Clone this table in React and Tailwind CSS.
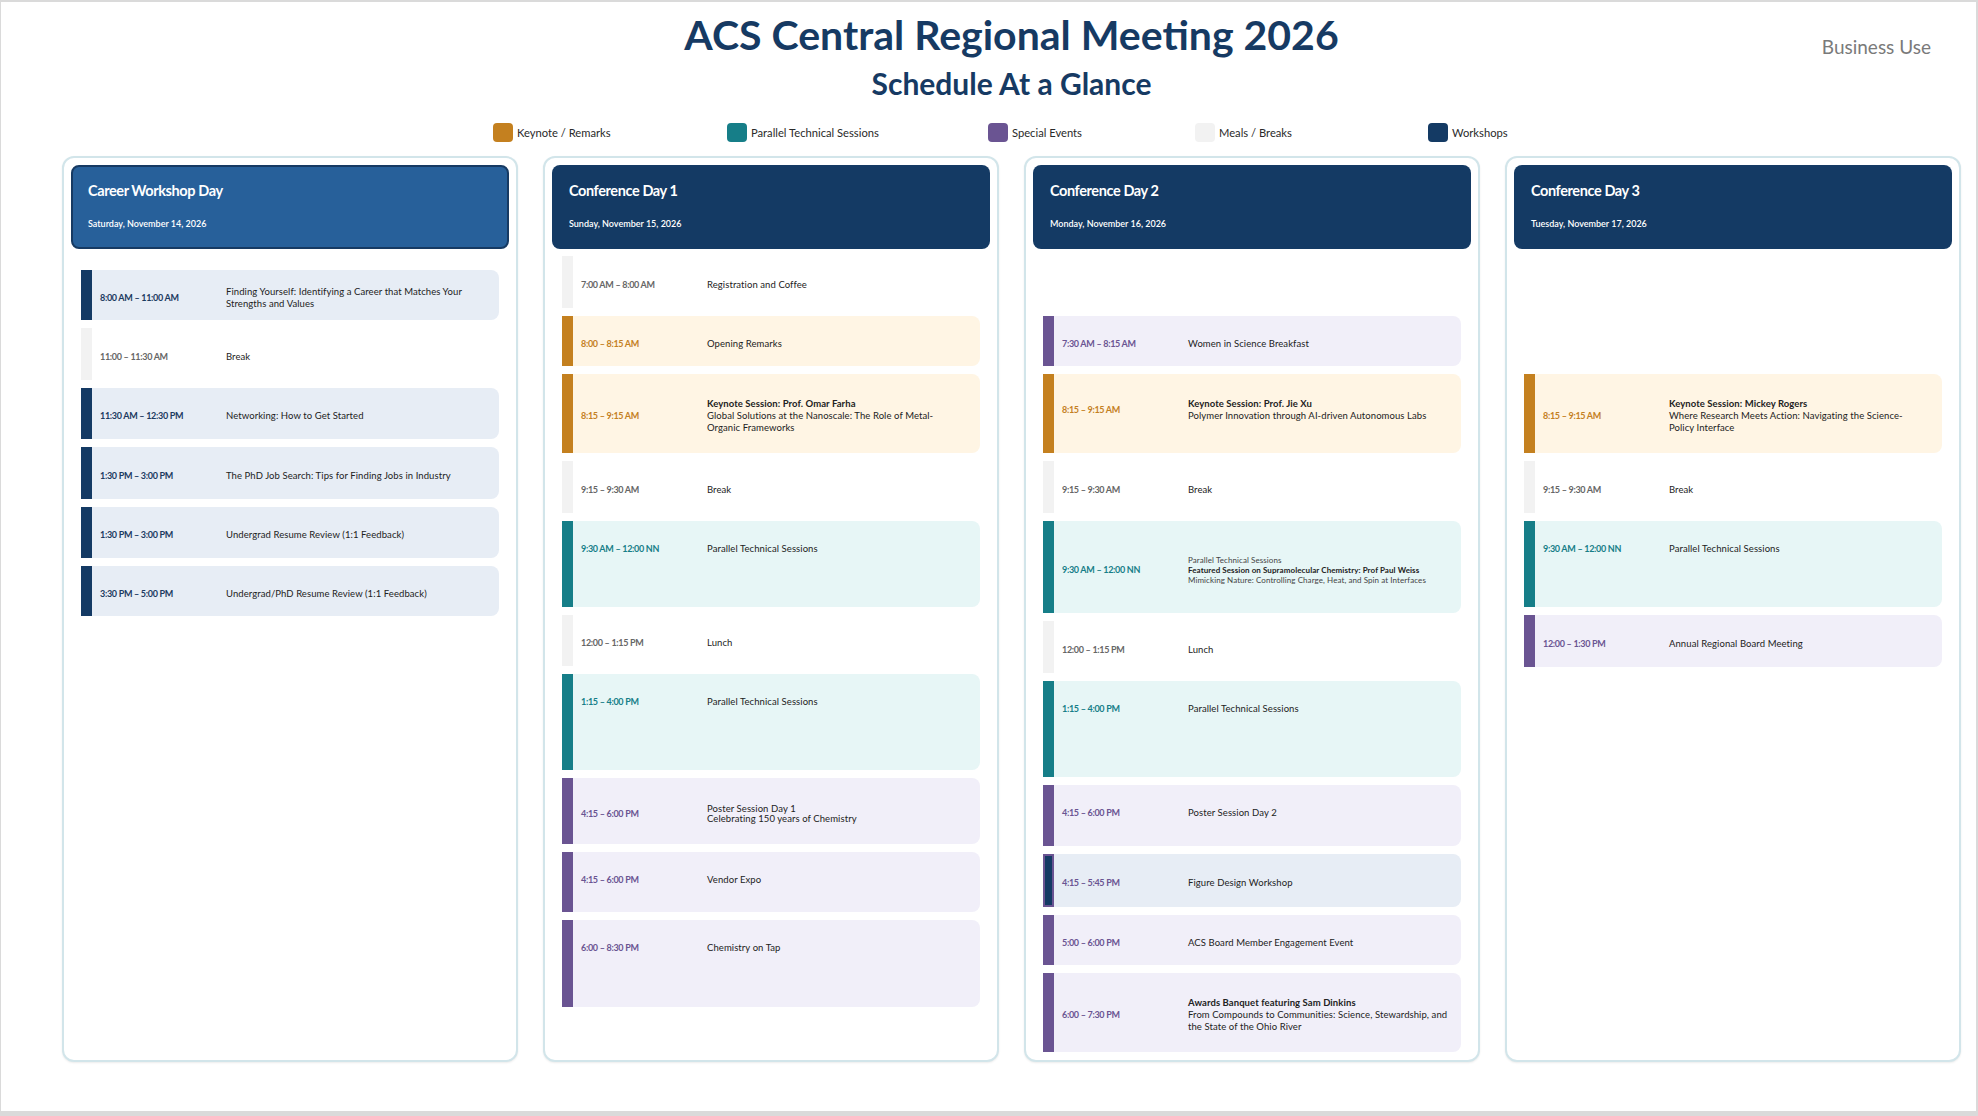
import React from "react";

const T = {
  ws: { bar: "bg-[#143a64]", bg: "bg-[#e7edf5]", time: "text-[#1b3a60]" },
  meal: { bar: "bg-[#f2f2f2]", bg: "bg-white", time: "text-[#666666]" },
  key: { bar: "bg-[#c4801f]", bg: "bg-[#fff5e4]", time: "text-[#c4801f]" },
  par: { bar: "bg-[#167e88]", bg: "bg-[#e7f6f6]", time: "text-[#167e88]" },
  sp: { bar: "bg-[#6a5492]", bg: "bg-[#f1eff9]", time: "text-[#6a5492]" },
  fig: { bar: "bg-[#143a64] border-2 border-[#6a5492]", bg: "bg-[#e7edf5]", time: "text-[#6a5492]" },
};

const C = "items-center pt-[5px]";
const TOP = "items-start pt-[22px]";
const TOP2 = "items-start pt-[24px]";

const B = "font-bold";
const SM = "text-[8px] leading-[10px] text-[#444]";
const SMB = "text-[8px] leading-[10px] font-bold";
const TL = "leading-[10px]";

const columns = [
  {
    title: "Career Workshop Day",
    date: "Saturday, November 14, 2026",
    light: true,
    mt: "mt-[21px]",
    rows: [
      { ty: "ws", h: "h-[50px]", a: C, time: "8:00 AM – 11:00 AM", lines: [["Finding Yourself: Identifying a Career that Matches Your"], ["Strengths and Values"]] },
      { ty: "meal", h: "h-[52px]", a: C, time: "11:00 – 11:30 AM", lines: [["Break"]] },
      { ty: "ws", h: "h-[51px]", a: C, time: "11:30 AM – 12:30 PM", lines: [["Networking: How to Get Started"]] },
      { ty: "ws", h: "h-[52px]", a: C, time: "1:30 PM – 3:00 PM", lines: [["The PhD Job Search: Tips for Finding Jobs in Industry"]] },
      { ty: "ws", h: "h-[51px]", a: C, time: "1:30 PM – 3:00 PM", lines: [["Undergrad Resume Review (1:1 Feedback)"]] },
      { ty: "ws", h: "h-[50px]", a: C, time: "3:30 PM – 5:00 PM", lines: [["Undergrad/PhD Resume Review (1:1 Feedback)"]] },
    ],
  },
  {
    title: "Conference Day 1",
    date: "Sunday, November 15, 2026",
    mt: "mt-[7px]",
    rows: [
      { ty: "meal", h: "h-[52px]", a: C, time: "7:00 AM – 8:00 AM", lines: [["Registration and Coffee"]] },
      { ty: "key", h: "h-[50px]", a: C, time: "8:00 – 8:15 AM", lines: [["Opening Remarks"]] },
      { ty: "key", h: "h-[79px]", a: C, time: "8:15 – 9:15 AM", lines: [["Keynote Session: Prof. Omar Farha", B], ["Global Solutions at the Nanoscale: The Role of Metal-"], ["Organic Frameworks"]] },
      { ty: "meal", h: "h-[52px]", a: C, time: "9:15 – 9:30 AM", lines: [["Break"]] },
      { ty: "par", h: "h-[86px]", a: TOP, time: "9:30 AM – 12:00 NN", lines: [["Parallel Technical Sessions"]] },
      { ty: "meal", h: "h-[51px]", a: C, time: "12:00 – 1:15 PM", lines: [["Lunch"]] },
      { ty: "par", h: "h-[96px]", a: TOP, time: "1:15 – 4:00 PM", lines: [["Parallel Technical Sessions"]] },
      { ty: "sp", h: "h-[66px]", a: C, time: "4:15 – 6:00 PM", lines: [["Poster Session Day 1", TL], ["Celebrating 150 years of Chemistry", TL]] },
      { ty: "sp", h: "h-[60px]", a: TOP, time: "4:15 – 6:00 PM", lines: [["Vendor Expo"]] },
      { ty: "sp", h: "h-[87px]", a: TOP, time: "6:00 – 8:30 PM", lines: [["Chemistry on Tap"]] },
    ],
  },
  {
    title: "Conference Day 2",
    date: "Monday, November 16, 2026",
    mt: "mt-[67px]",
    rows: [
      { ty: "sp", h: "h-[50px]", a: C, time: "7:30 AM – 8:15 AM", lines: [["Women in Science Breakfast"]] },
      { ty: "key", h: "h-[79px]", a: TOP2, time: "8:15 – 9:15 AM", lines: [["Keynote Session: Prof. Jie Xu", B], ["Polymer Innovation through AI-driven Autonomous Labs"]] },
      { ty: "meal", h: "h-[52px]", a: C, time: "9:15 – 9:30 AM", lines: [["Break"]] },
      { ty: "par", h: "h-[92px]", a: C, time: "9:30 AM – 12:00 NN", lines: [["Parallel Technical Sessions", SM], ["Featured Session on Supramolecular Chemistry: Prof Paul Weiss", SMB], ["Mimicking Nature: Controlling Charge, Heat, and Spin at Interfaces", SM]] },
      { ty: "meal", h: "h-[52px]", a: C, time: "12:00 – 1:15 PM", lines: [["Lunch"]] },
      { ty: "par", h: "h-[96px]", a: TOP, time: "1:15 – 4:00 PM", lines: [["Parallel Technical Sessions"]] },
      { ty: "sp", h: "h-[61px]", a: TOP, time: "4:15 – 6:00 PM", lines: [["Poster Session Day 2"]] },
      { ty: "fig", h: "h-[53px]", a: C, time: "4:15 – 5:45 PM", lines: [["Figure Design Workshop"]] },
      { ty: "sp", h: "h-[50px]", a: C, time: "5:00 – 6:00 PM", lines: [["ACS Board Member Engagement Event"]] },
      { ty: "sp", h: "h-[79px]", a: C, time: "6:00 – 7:30 PM", lines: [["Awards Banquet featuring Sam Dinkins", B], ["From Compounds to Communities: Science, Stewardship, and"], ["the State of the Ohio River"]] },
    ],
  },
  {
    title: "Conference Day 3",
    date: "Tuesday, November 17, 2026",
    mt: "mt-[125px]",
    rows: [
      { ty: "key", h: "h-[79px]", a: C, time: "8:15 – 9:15 AM", lines: [["Keynote Session: Mickey Rogers", B], ["Where Research Meets Action: Navigating the Science-"], ["Policy Interface"]] },
      { ty: "meal", h: "h-[52px]", a: C, time: "9:15 – 9:30 AM", lines: [["Break"]] },
      { ty: "par", h: "h-[86px]", a: TOP, time: "9:30 AM – 12:00 NN", lines: [["Parallel Technical Sessions"]] },
      { ty: "sp", h: "h-[52px]", a: C, time: "12:00 – 1:30 PM", lines: [["Annual Regional Board Meeting"]] },
    ],
  },
];

const legend = [
  { label: "Keynote / Remarks", sw: "bg-[#c4801f]", w: "w-[234px]" },
  { label: "Parallel Technical Sessions", sw: "bg-[#167e88]", w: "w-[261px]" },
  { label: "Special Events", sw: "bg-[#6a5492]", w: "w-[207px]" },
  { label: "Meals / Breaks", sw: "bg-[#f2f2f2]", w: "w-[233px]" },
  { label: "Workshops", sw: "bg-[#143a64]", w: "w-auto" },
];

function Row({ r }) {
  const t = T[r.ty];
  return (
    <div className={`flex ${r.h}`}>
      <div className={`w-[11px] shrink-0 ${t.bar}`} />
      <div className={`flex flex-1 rounded-r-[8px] pl-[8px] ${t.bg} ${r.a}`}>
        <div className="flex w-full items-center">
          <div className={`w-[126px] shrink-0 whitespace-nowrap text-[9px] font-bold leading-[12px] tracking-[-0.3px] ${t.time}`}>
            {r.time}
          </div>
          <div className="flex-1 text-[9.5px] leading-[12px] tracking-[0.08px] text-[#222222]">
            {r.lines.map(([txt, cls], i) => (
              <div key={i} className={`whitespace-nowrap ${cls || ""}`}>
                {txt}
              </div>
            ))}
          </div>
        </div>
      </div>
    </div>
  );
}

function Column({ c }) {
  return (
    <div className="flex h-[906px] flex-col rounded-[12px] border-2 border-[#d2e5ea] bg-white px-[7px] pt-[7px] shadow-[0_1px_2px_rgba(0,0,0,0.08)]">
      <div
        className={
          c.light
            ? "h-[84px] rounded-[8px] border-2 border-[#163a63] bg-[#27609a] pl-[15px] pt-[14px] text-white"
            : "h-[84px] rounded-[8px] bg-[#143a64] pl-[17px] pt-[16px] text-white"
        }
      >
        <div className="text-[14.5px] font-bold leading-[20px] tracking-[-0.4px]">{c.title}</div>
        <div className="mt-[16px] text-[9px] font-semibold leading-[14px]">{c.date}</div>
      </div>
      <div className={`flex flex-col gap-[8px] px-[10px] ${c.mt}`}>
        {c.rows.map((r, i) => (
          <Row key={i} r={r} />
        ))}
      </div>
    </div>
  );
}

export default function App() {
  return (
    <div className="h-[1116px] w-[1978px] bg-[#dadada] pb-[5px] pl-[1px] pr-[2px] pt-[2px] font-['Lato',_'Open_Sans',_sans-serif]">
      <div className="relative h-full bg-white">
        <div className="absolute right-[45px] top-[34px] text-[19px] leading-[22px] text-[#7a7a7a]">Business Use</div>
        <div className="pl-[46px] pt-[12px] text-center text-[#163a63]">
          <div className="text-[41px] font-bold leading-[41px]">ACS Central Regional Meeting 2026</div>
          <div className="mt-[13px] text-[30px] font-bold leading-[30px]">Schedule At a Glance</div>
        </div>
        <div className="mt-[25px] flex h-[19px] items-center pl-[492px]">
          {legend.map((l, i) => (
            <div key={i} className={`flex items-center gap-[4px] ${l.w}`}>
              <div className={`h-[19px] w-[20px] rounded-[4px] ${l.sw}`} />
              <span className="text-[11.2px] leading-[14px] text-[#2a2a2a]">{l.label}</span>
            </div>
          ))}
        </div>
        <div className="mt-[14px] grid grid-cols-[456px_456px_456px_456px] gap-x-[25px] pl-[61px]">
          {columns.map((c, i) => (
            <Column key={i} c={c} />
          ))}
        </div>
      </div>
    </div>
  );
}
